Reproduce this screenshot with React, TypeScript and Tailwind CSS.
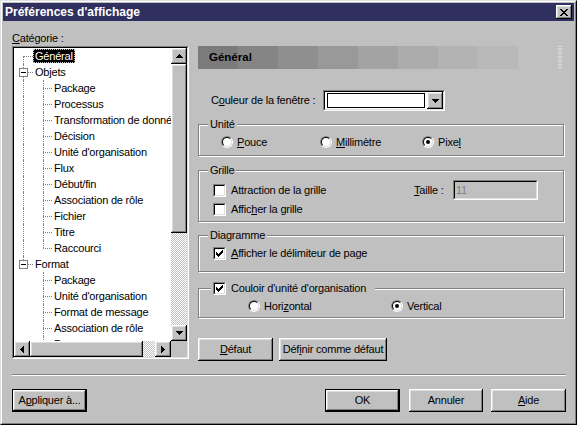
import React from "react";

const raised =
  "shadow-[inset_-1px_-1px_0_#000,inset_1px_1px_0_#fff,inset_-2px_-2px_0_#808080,inset_2px_2px_0_#dfdfdf]";

function Sunken({
  className = "",
  inner = "",
  children,
}: {
  className?: string;
  inner?: string;
  children?: React.ReactNode;
}) {
  return (
    <div className={"border border-t-[#808080] border-l-[#808080] border-r-white border-b-white " + className}>
      <div className={"w-full h-full border border-t-black border-l-black border-r-[#dfdfdf] border-b-[#dfdfdf] " + inner}>
        {children}
      </div>
    </div>
  );
}

type Dir = "up" | "down" | "left" | "right";
const arrowRects: Record<Dir, number[][]> = {
  up: [[3, 0, 1, 1], [2, 1, 3, 1], [1, 2, 5, 1], [0, 3, 7, 1]],
  down: [[0, 0, 7, 1], [1, 1, 5, 1], [2, 2, 3, 1], [3, 3, 1, 1]],
  left: [[0, 3, 1, 1], [1, 2, 1, 3], [2, 1, 1, 5], [3, 0, 1, 7]],
  right: [[0, 0, 1, 7], [1, 1, 1, 5], [2, 2, 1, 3], [3, 3, 1, 1]],
};

function Arrow({ dir }: { dir: Dir }) {
  const v = dir === "up" || dir === "down";
  return (
    <svg width={v ? 7 : 4} height={v ? 4 : 7} shapeRendering="crispEdges">
      {arrowRects[dir].map((r, i) => (
        <rect key={i} x={r[0]} y={r[1]} width={r[2]} height={r[3]} fill="#000" />
      ))}
    </svg>
  );
}

function SBtn({ dir }: { dir: Dir }) {
  return (
    <div className={"w-4 h-4 shrink-0 bg-[#c0c0c0] flex items-center justify-center " + raised}>
      <Arrow dir={dir} />
    </div>
  );
}

function CheckMark() {
  const r = [
    [6, 0, 1], [5, 1, 2], [0, 2, 1], [4, 2, 3], [0, 3, 2], [3, 3, 3], [0, 4, 5], [1, 5, 3], [2, 6, 1],
  ];
  return (
    <svg width="7" height="7" shapeRendering="crispEdges">
      {r.map((q, i) => (
        <rect key={i} x={q[0]} y={q[1]} width={q[2]} height={1} fill="#000" />
      ))}
    </svg>
  );
}

function Check({ checked = false }: { checked?: boolean }) {
  return (
    <div className="w-[13px] h-[13px] shrink-0 border border-t-[#808080] border-l-[#808080] border-r-white border-b-white">
      <div className="w-full h-full bg-white border border-t-black border-l-black border-r-[#dfdfdf] border-b-[#dfdfdf] flex items-center justify-center">
        {checked && <CheckMark />}
      </div>
    </div>
  );
}

function Radio({ checked = false }: { checked?: boolean }) {
  return (
    <div className="w-3 h-3 shrink-0 rounded-full border border-t-[#808080] border-l-[#808080] border-r-white border-b-white">
      <div className="w-full h-full rounded-full bg-white border border-t-black border-l-black border-r-[#dfdfdf] border-b-[#dfdfdf] flex items-center justify-center">
        {checked && <div className="w-1 h-1 rounded-full bg-black" />}
      </div>
    </div>
  );
}

type Row = {
  t: string;
  l: 0 | 1;
  sel?: boolean;
  exp?: boolean;
  root: "first" | "mid" | "through" | "last" | "none";
  child?: "mid" | "last";
};

const objChildren = [
  "Package",
  "Processus",
  "Transformation de données",
  "Décision",
  "Unité d'organisation",
  "Flux",
  "Début/fin",
  "Association de rôle",
  "Fichier",
  "Titre",
  "Raccourci",
];
const fmtChildren = ["Package", "Unité d'organisation", "Format de message", "Association de rôle", "Processus"];

const rows: Row[] = [
  { t: "Général", l: 0, sel: true, root: "first" },
  { t: "Objets", l: 0, exp: true, root: "mid" },
  ...objChildren.map(
    (t, i): Row => ({ t, l: 1, root: "through", child: i === objChildren.length - 1 ? "last" : "mid" })
  ),
  { t: "Format", l: 0, exp: true, root: "last" },
  ...fmtChildren.map((t): Row => ({ t, l: 1, root: "none", child: "mid" })),
];

const dotV = "absolute border-l border-dotted border-[#808080]";
const dotH = "absolute border-t border-dotted border-[#808080]";

function TreeRow({ r }: { r: Row }) {
  return (
    <div className="flex h-4 shrink-0">
      <div className="relative w-[19px] h-4 shrink-0">
        {r.root === "first" && <span className={dotV + " left-[9px] top-[8px] bottom-0"} />}
        {(r.root === "mid" || r.root === "through") && <span className={dotV + " left-[9px] top-0 bottom-0"} />}
        {r.root === "last" && <span className={dotV + " left-[9px] top-0 h-[8px]"} />}
        {r.l === 0 && <span className={dotH + " left-[9px] right-0 top-[8px]"} />}
        {r.exp && (
          <span className="absolute left-[5px] top-[4px] w-[9px] h-[9px] bg-white border border-[#808080] flex items-center justify-center">
            <span className="w-[5px] h-px bg-black" />
          </span>
        )}
      </div>
      {r.l === 1 && (
        <div className="relative w-[19px] h-4 shrink-0">
          {r.child === "mid" && <span className={dotV + " left-[10px] top-0 bottom-0"} />}
          {r.child === "last" && <span className={dotV + " left-[10px] top-0 h-[8px]"} />}
          <span className={dotH + " left-[10px] right-0 top-[8px]"} />
        </div>
      )}
      <div className="flex items-center">
        <span
          className={
            "px-[2px] h-[14px] leading-[14px] whitespace-nowrap " +
            (r.sel ? "bg-black text-white outline outline-1 outline-dotted outline-[#c0c0c0] -outline-offset-1" : "")
          }
        >
          {r.t}
        </span>
      </div>
    </div>
  );
}

function Tree() {
  return (
    <Sunken className="w-[177px] h-[313px]" inner="bg-white grid grid-cols-[1fr_16px] grid-rows-[1fr_16px] overflow-hidden">
      <div className="overflow-hidden flex flex-col">
        {rows.map((r, i) => (
          <TreeRow key={i} r={r} />
        ))}
      </div>
      <div className="flex flex-col bg-[#c0c0c0]">
        <SBtn dir="up" />
        <div className={"h-[169px] shrink-0 bg-[#c0c0c0] " + raised} />
        <div className="flex-1 bg-[repeating-conic-gradient(#c0c0c0_0_25%,#ffffff_0_50%)] bg-[length:2px_2px]" />
        <SBtn dir="down" />
      </div>
      <div className="flex bg-[#c0c0c0]">
        <SBtn dir="left" />
        <div className={"w-[113px] shrink-0 bg-[#c0c0c0] " + raised} />
        <div className="flex-1 bg-[repeating-conic-gradient(#c0c0c0_0_25%,#ffffff_0_50%)] bg-[length:2px_2px]" />
        <SBtn dir="right" />
      </div>
      <div className="bg-[#c0c0c0]" />
    </Sunken>
  );
}

const fieldset =
  "w-[366px] border border-[#808080] shadow-[inset_1px_1px_0_#fff,1px_1px_0_#fff] shrink-0";
const legend = "leading-[13px] bg-[#c0c0c0]";

function Btn({
  children,
  className = "",
  def = false,
}: {
  children: React.ReactNode;
  className?: string;
  def?: boolean;
}) {
  return (
    <div
      className={
        "h-[23px] shrink-0 bg-[#c0c0c0] flex items-center justify-center whitespace-nowrap " +
        raised +
        " " +
        (def ? "border border-black " : "") +
        className
      }
    >
      {children}
    </div>
  );
}

function XGlyph() {
  const r = [
    [0, 0, 2], [6, 0, 2], [1, 1, 2], [5, 1, 2], [2, 2, 4], [3, 3, 2], [2, 4, 4], [1, 5, 2], [5, 5, 2], [0, 6, 2], [6, 6, 2],
  ];
  return (
    <svg width="8" height="7" shapeRendering="crispEdges">
      {r.map((q, i) => (
        <rect key={i} x={q[0]} y={q[1]} width={q[2]} height={1} fill="#000" />
      ))}
    </svg>
  );
}

export default function App() {
  return (
    <div className="w-[577px] h-[425px] bg-[#c0c0c0] border border-t-[#dfdfdf] border-l-[#dfdfdf] border-r-black border-b-black [font-family:'Liberation_Sans',Arial,sans-serif] text-[11px] text-black tracking-[-0.2px]">
      <div className="w-full h-full border border-t-white border-l-white border-r-[#808080] border-b-[#808080] p-px flex flex-col">
        {/* Title bar */}
        <div className="h-[18px] shrink-0 bg-[#303060] flex items-center justify-between pl-[2px] pr-[2px]">
          <span className="text-white font-bold text-[12px] tracking-normal leading-[18px]">Préférences d'affichage</span>
          <div className={"w-4 h-[14px] bg-[#c0c0c0] flex items-center justify-center " + raised}>
            <XGlyph />
          </div>
        </div>

        <div className="flex flex-col pl-[9px] pr-[8px] pt-[9px]">
          <div className="flex gap-[9px]">
            {/* Left column */}
            <div className="flex flex-col w-[177px] shrink-0">
              <div className="h-4 leading-[16px]">
                <u>C</u>atégorie :
              </div>
              <Tree />
            </div>

            {/* Right column */}
            <div className="flex flex-col flex-1 pt-4">
              <div className="flex h-[23px] shrink-0">
                <div className="w-[320px] h-full flex items-center pl-[11px] bg-[linear-gradient(90deg,#7b7b7b_0_40px,#858585_40px_80px,#8f8f8f_80px_120px,#999999_120px_160px,#a3a3a3_160px_200px,#acacac_200px_240px,#b3b3b3_240px_280px,#b9b9b9_280px_320px)]">
                  <span className="font-bold text-[11.5px] tracking-normal">Général</span>
                </div>
                <div className="w-[40px]" />
                <div className="w-[4px] h-full bg-[repeating-linear-gradient(0deg,#dcdcdc_0_1px,transparent_1px_2px)]" />
              </div>

              <div className="mt-[21px] h-[21px] flex items-center shrink-0">
                <div className="w-[125px] pl-[13px]">
                  C<u>o</u>uleur de la fenêtre :
                </div>
                <Sunken className="w-[122px] h-[21px]" inner="bg-white flex items-stretch">
                  <div className="flex-1 ml-[2px] mr-[2px] my-[1px] border border-black bg-white" />
                  <div className={"w-4 shrink-0 bg-[#c0c0c0] flex items-center justify-center " + raised}>
                    <Arrow dir="down" />
                  </div>
                </Sunken>
              </div>

              {/* Unité */}
              <fieldset className={fieldset + " mt-[7px] h-[38px]"}>
                <legend className={legend + " ml-[9px] px-[2px]"}>Unité</legend>
                <div className="mt-[4px] h-[14px] flex items-center pl-[22px]">
                  <div className="w-[99px] flex items-center gap-[4px]">
                    <Radio />
                    <span>
                      <u>P</u>ouce
                    </span>
                  </div>
                  <div className="w-[102px] flex items-center gap-[4px]">
                    <Radio />
                    <span>
                      <u>M</u>illimètre
                    </span>
                  </div>
                  <div className="flex items-center gap-[4px]">
                    <Radio checked />
                    <span>
                      Pixe<u>l</u>
                    </span>
                  </div>
                </div>
              </fieldset>

              {/* Grille */}
              <fieldset className={fieldset + " mt-[8px] h-[58px]"}>
                <legend className={legend + " ml-[9px] px-[2px]"}>Grille</legend>
                <div className="mt-[3px] h-[20px] flex items-center pl-[14px]">
                  <div className="w-[201px] flex items-center gap-[5px]">
                    <Check />
                    <span>Attraction de la grille</span>
                  </div>
                  <div className="w-[39px]">
                    <u>T</u>aille :
                  </div>
                  <Sunken className="w-[85px] h-[20px]" inner="bg-[#c0c0c0] text-[#808080] pl-[1px] leading-[16px]">
                    11
                  </Sunken>
                </div>
                <div className="mt-[3px] h-[13px] flex items-center pl-[14px] gap-[5px]">
                  <Check />
                  <span>
                    Affic<u>h</u>er la grille
                  </span>
                </div>
              </fieldset>

              {/* Diagramme */}
              <fieldset className={fieldset + " mt-[7px] h-[43px]"}>
                <legend className={legend + " ml-[9px] px-[2px]"}>Diagramme</legend>
                <div className="mt-[5px] h-[13px] flex items-center pl-[14px] gap-[5px]">
                  <Check checked />
                  <span>
                    <u>A</u>fficher le délimiteur de page
                  </span>
                </div>
              </fieldset>

              {/* Couloir */}
              <fieldset className={fieldset + " mt-[10px] h-[36px]"}>
                <legend className={legend + " ml-[12px] pl-[2px] pr-[9px]"}>
                  <div className="flex items-center gap-[5px] h-[13px]">
                    <Check checked />
                    <span>Couloir d'unité d'organisation</span>
                  </div>
                </legend>
                <div className="mt-[5px] h-[12px] flex items-center pl-[49px]">
                  <div className="w-[143px] flex items-center gap-[4px]">
                    <Radio />
                    <span>
                      Hori<u>z</u>ontal
                    </span>
                  </div>
                  <div className="flex items-center gap-[4px]">
                    <Radio checked />
                    <span>Vertical</span>
                  </div>
                </div>
              </fieldset>

              <div className="mt-[20px] flex gap-[6px]">
                <Btn className="w-[75px]">
                  <span>
                    <u>D</u>éfaut
                  </span>
                </Btn>
                <Btn className="w-[108px]">
                  <span>
                    Déf<u>i</u>nir comme défaut
                  </span>
                </Btn>
              </div>
            </div>
          </div>

          <div className="mt-[13px] h-[2px] border-t border-t-[#808080] border-b border-b-white" />

          <div className="mt-[13px] flex">
            <Btn def className="w-[75px]">
              <span>
                A<u>p</u>pliquer à...
              </span>
            </Btn>
            <Btn def className="w-[75px] ml-auto">
              <span>OK</span>
            </Btn>
            <Btn className="w-[74px] ml-[9px]">
              <span>Annuler</span>
            </Btn>
            <Btn className="w-[75px] ml-[8px]">
              <span>
                <u>A</u>ide
              </span>
            </Btn>
          </div>
        </div>
      </div>
    </div>
  );
}
